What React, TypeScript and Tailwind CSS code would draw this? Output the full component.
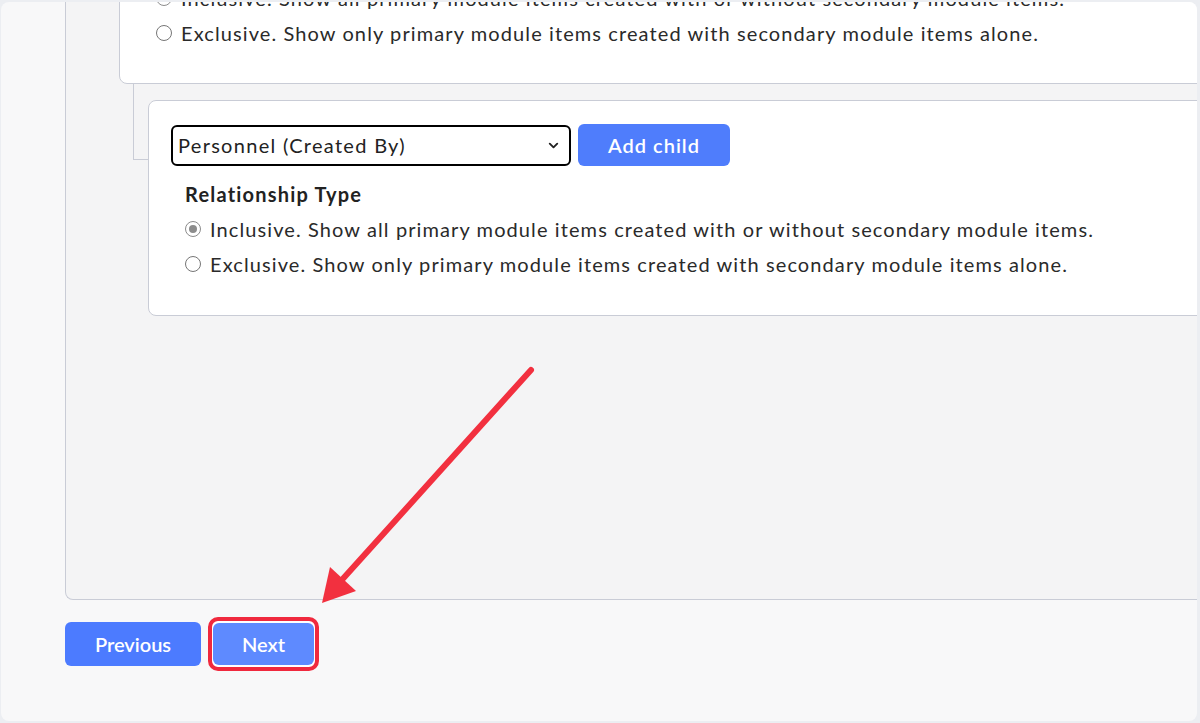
import { ChevronDown } from "lucide-react";

const FONT = { fontFamily: "Lato, 'Noto Sans', sans-serif" };

function Radio({ checked, label }: { checked?: boolean; label: string }) {
  return (
    <div className="flex h-[35px] items-center">
      {checked ? (
        <span className="flex h-[16px] w-[16px] shrink-0 items-center justify-center rounded-full border-[1.5px] border-[#8c8c8c] bg-white">
          <span className="h-[8px] w-[8px] rounded-full bg-[#8c8c8c]" />
        </span>
      ) : (
        <span className="h-[16px] w-[16px] shrink-0 rounded-full border border-[#767676] bg-white" />
      )}
      <span className="ml-[9px] whitespace-nowrap text-[20px] leading-none tracking-[1.1px] text-[#2a2a2a]">
        {label}
      </span>
    </div>
  );
}

function ChildCard({ value, first }: { value: string; first?: boolean }) {
  return (
    <div
      className={
        first
          ? "w-[1100px] rounded-lg border border-[#c9ccd6] bg-white pb-[33px] pl-[22px] pt-[23px]"
          : "w-[1100px] rounded-lg border border-[#c9ccd6] bg-white pb-[34px] pl-[22px] pt-[23px]"
      }
    >
      <div className="flex items-center">
        <div className="flex h-[41px] w-[400px] items-center justify-between rounded-md border-2 border-black pl-[5px] pr-[8px] text-[20px] tracking-[1.3px] text-[#222]">
          <span>{value}</span>
          <ChevronDown className="h-[15px] w-[15px]" strokeWidth={3} />
        </div>
        <button className="ml-[7px] h-[42px] w-[152px] rounded-md bg-[#4f7dfc] text-[20px] font-semibold tracking-[1px] text-white">
          Add child
        </button>
      </div>
      <div className="pl-[14px]">
        <div className="mt-[14px] h-[28px] text-[20px] font-bold leading-[28px] tracking-[1.2px] text-[#222]">
          Relationship Type
        </div>
        <div className={first ? "mt-[4px]" : "mt-[3px]"}>
          <Radio checked label="Inclusive. Show all primary module items created with or without secondary module items." />
          <Radio label="Exclusive. Show only primary module items created with secondary module items alone." />
        </div>
      </div>
    </div>
  );
}

export default function App() {
  return (
    <div className="relative h-[723px] w-[1200px] bg-[#eceef2] pl-[1px] pt-[2px]" style={FONT}>
      <div className="relative h-[719px] w-[1196px] overflow-hidden rounded-lg bg-[#f8f8f9]">
        <div className="-mt-[134px]">
          <div className="ml-[64px] w-[1200px] rounded-bl-lg border-b border-l border-[#c9ccd6] bg-[#f4f4f5] pb-[283px] pl-[53px]">
            <ChildCard first value="Projects (Linked Project)" />
            <div className="relative ml-[14px] pl-[15px] pt-[16px] before:absolute before:left-0 before:top-0 before:h-[76px] before:w-[15px] before:border-b before:border-l before:border-[#c9ccd6]">
              <ChildCard value="Personnel (Created By)" />
            </div>
          </div>
          <div className="ml-[64px] mt-[17px] flex items-center">
            <button className="h-[44px] w-[136px] rounded-md bg-[#4c7bff] text-[20px] font-semibold text-white">
              Previous
            </button>
            <span className="ml-[7px] inline-flex rounded-[10px] border-4 border-[#f0293e] bg-white px-[1px] py-[2px]">
              <button className="h-[42px] w-[101px] rounded-md bg-[#5e8aff] text-[20px] font-semibold text-white">
                Next
              </button>
            </span>
          </div>
        </div>
      </div>
      <svg className="pointer-events-none absolute left-0 top-0" width="1200" height="723">
        <line x1="531" y1="370" x2="340" y2="582" stroke="#f2303f" strokeWidth="6" strokeLinecap="round" />
        <polygon points="322,603 330,567 356,591" fill="#f2303f" />
      </svg>
    </div>
  );
}
